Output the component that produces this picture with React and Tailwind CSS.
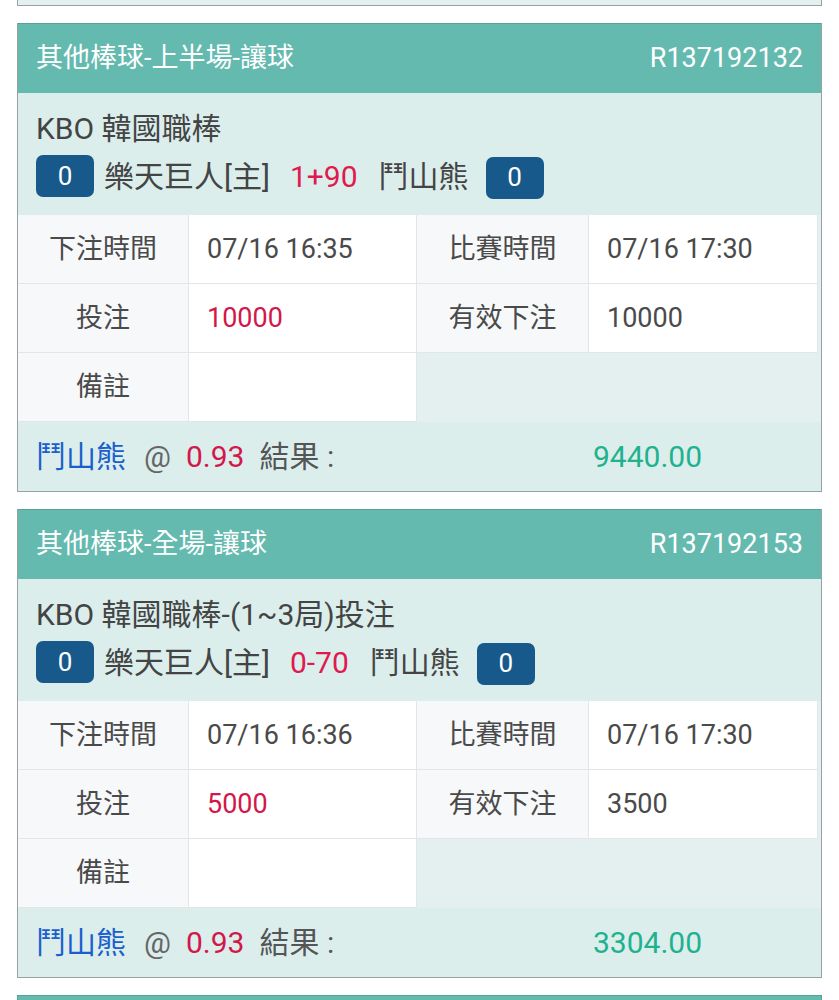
const bets = [
  {
    type: '其他棒球-上半場-讓球',
    id: 'R137192132',
    league: 'KBO 韓國職棒',
    home: '樂天巨人[主]',
    line: '1+90',
    away: '鬥山熊',
    betTime: '07/16 16:35',
    matchTime: '07/16 17:30',
    stake: '10000',
    valid: '10000',
    pick: '鬥山熊',
    odds: '0.93',
    result: '9440.00',
  },
  {
    type: '其他棒球-全場-讓球',
    id: 'R137192153',
    league: 'KBO 韓國職棒-(1~3局)投注',
    home: '樂天巨人[主]',
    line: '0-70',
    away: '鬥山熊',
    betTime: '07/16 16:36',
    matchTime: '07/16 17:30',
    stake: '5000',
    valid: '3500',
    pick: '鬥山熊',
    odds: '0.93',
    result: '3304.00',
  },
];

function Badge({ children }) {
  return (
    <span className="inline-flex h-[42px] w-[58px] items-center justify-center rounded-[7px] bg-[#17598a] text-[26px] text-white">
      {children}
    </span>
  );
}

function Label({ children }) {
  return (
    <div className="flex h-[69px] items-center justify-center border-r border-b border-[#e3e6e8] bg-[#f7f8fa] text-[27px] text-[#4a4a4a]">
      {children}
    </div>
  );
}

function Value({ children, red }) {
  return (
    <div
      className={`flex h-[69px] items-center border-r border-b border-[#e3e6e8] bg-white pl-[18px] text-[27px] ${
        red ? 'text-[#d2184b]' : 'text-[#4a4a4a]'
      }`}
    >
      {children}
    </div>
  );
}

function BetCard({ bet }) {
  return (
    <div className="mt-[17px] border-x border-b border-[#97a3a2]">
      <div className="flex h-[70px] items-center justify-between border-t border-[#56a297] bg-[#65bab0] px-[18px] text-[27px] text-white">
        <span>{bet.type}</span>
        <span>{bet.id}</span>
      </div>
      <div className="bg-[#dbeeec] pt-[15px] pb-[18px] pl-[18px] text-[30px] text-[#444]">
        <div className="flex h-[40px] items-center">{bet.league}</div>
        <div className="mt-[7px] flex h-[42px] items-center">
          <Badge>0</Badge>
          <span className="ml-[10px]">{bet.home}</span>
          <span className="ml-[20px] text-[#e0194f]">{bet.line}</span>
          <span className="ml-[21px]">{bet.away}</span>
          <span className="ml-[17px]">
            <Badge>0</Badge>
          </span>
        </div>
      </div>
      <div className="grid grid-cols-[171px_228px_172px_1fr] bg-[#e3f0ef] pr-[3px]">
        <Label>下注時間</Label>
        <Value>{bet.betTime}</Value>
        <Label>比賽時間</Label>
        <Value>{bet.matchTime}</Value>
        <Label>投注</Label>
        <Value red>{bet.stake}</Value>
        <Label>有效下注</Label>
        <Value>{bet.valid}</Value>
        <Label>備註</Label>
        <Value />
        <div className="col-span-2 h-[69px]" />
      </div>
      <div className="flex h-[69px] items-center bg-[#dbeeec] pl-[18px] text-[30px]">
        <div className="flex w-[557px] items-center">
          <span className="text-[#1b5fcc]">{bet.pick}</span>
          <span className="ml-[18px] text-[#666]">@</span>
          <span className="ml-[15px] text-[#d2184b]">{bet.odds}</span>
          <span className="ml-[15px] text-[#555]">結果 :</span>
        </div>
        <span className="text-[#1fb28f]">{bet.result}</span>
      </div>
    </div>
  );
}

export default function App() {
  return (
    <div
      className="h-[1000px] overflow-hidden bg-white px-[17px]"
      style={{ fontFamily: 'Roboto, "Noto Sans CJK TC", sans-serif' }}
    >
      <div className="h-[6px] border-x border-b border-[#97a3a2] bg-[#e3f0ef]" />
      {bets.map((b) => (
        <BetCard key={b.id} bet={b} />
      ))}
      <div className="mt-[17px] h-[70px] border-x border-t border-[#56a297] bg-[#65bab0]" />
    </div>
  );
}
